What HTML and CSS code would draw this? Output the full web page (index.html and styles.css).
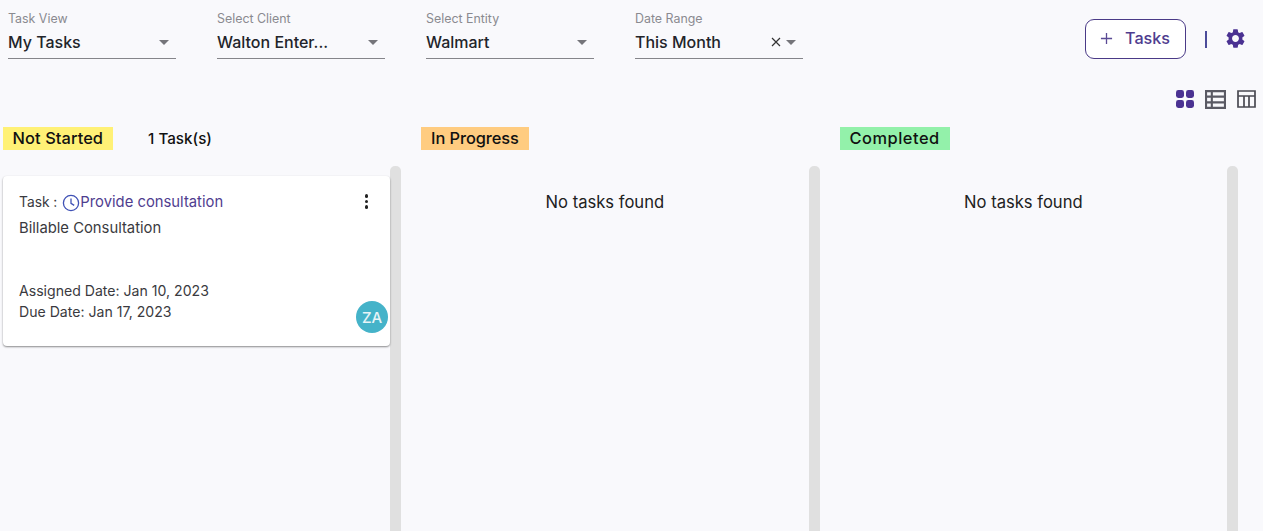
FILE: index.html
```html
<!DOCTYPE html>
<html lang="en">
<head>
    <meta charset="UTF-8">
    <meta name="viewport" content="width=device-width, initial-scale=1.0">
    <title>Tasks</title>
    <link rel="stylesheet" href="styles.css">
</head>
<body>
    <div class="topbar">
        <div class="filters">
            <div class="field">
                <label>Task View</label>
                <div class="select"><span class="value">My Tasks</span><span class="caret"></span></div>
            </div>
            <div class="field">
                <label>Select Client</label>
                <div class="select"><span class="value">Walton Enter...</span><span class="caret"></span></div>
            </div>
            <div class="field">
                <label>Select Entity</label>
                <div class="select"><span class="value">Walmart</span><span class="caret"></span></div>
            </div>
            <div class="field">
                <label>Date Range</label>
                <div class="select">
                    <span class="value">This Month</span>
                    <svg class="clear" viewBox="0 0 10 10"><path d="M1 1l8 8M9 1l-8 8"/></svg>
                    <span class="caret caret-date"></span>
                </div>
            </div>
        </div>
        <div class="actions">
            <button class="add-btn"><svg viewBox="0 0 14 14"><path d="M7 1v12M1 7h12"/></svg>Tasks</button>
            <span class="divider"></span>
            <svg class="gear" viewBox="0 0 24 24"><path d="M19.14 12.94c.04-.3.06-.61.06-.94 0-.32-.02-.64-.07-.94l2.03-1.58a.49.49 0 0 0 .12-.61l-1.92-3.32a.49.49 0 0 0-.59-.22l-2.39.96c-.5-.38-1.03-.7-1.62-.94l-.36-2.54a.48.48 0 0 0-.48-.41h-3.84c-.24 0-.43.17-.47.41l-.36 2.54c-.59.24-1.13.57-1.62.94l-2.39-.96a.48.48 0 0 0-.59.22L2.74 8.87c-.12.21-.08.47.12.61l2.03 1.58c-.05.3-.09.63-.09.94s.02.64.07.94l-2.03 1.58a.49.49 0 0 0-.12.61l1.92 3.32c.12.22.37.29.59.22l2.39-.96c.5.38 1.03.7 1.62.94l.36 2.54c.05.24.24.41.48.41h3.84c.24 0 .44-.17.47-.41l.36-2.54c.59-.24 1.13-.56 1.62-.94l2.39.96c.22.08.47 0 .59-.22l1.92-3.32a.46.46 0 0 0-.12-.61l-2.01-1.58zM12 15.6c-1.98 0-3.6-1.62-3.6-3.6s1.62-3.6 3.6-3.6 3.6 1.62 3.6 3.6-1.62 3.6-3.6 3.6z"/></svg>
        </div>
    </div>

    <div class="view-icons">
        <svg class="view-grid" viewBox="0 0 18 18">
            <rect x="0" y="0" width="8" height="8" rx="2.4"/>
            <rect x="10" y="0" width="8" height="8" rx="2.4"/>
            <rect x="0" y="10" width="8" height="8" rx="2.4"/>
            <rect x="10" y="10" width="8" height="8" rx="2.4"/>
        </svg>
        <svg class="view-list" viewBox="0 0 20 18">
            <path d="M1 1h18v16H1zM1 6.3h18M1 11.7h18M6.5 1v16"/>
        </svg>
        <svg class="view-table" viewBox="0 0 19 18">
            <path d="M1 1h17v16H1zM1 6h17M7 6v11M12 6v11"/>
        </svg>
    </div>

    <div class="board">
        <section class="column">
            <div class="column-head">
                <span class="status status-new">Not Started</span>
                <span class="count">1 Task(s)</span>
            </div>
            <div class="column-body">
                <div class="column-list">
                    <article class="card">
                        <div class="card-title">
                            <span>Task :</span>
                            <svg class="clock" viewBox="0 0 18 18"><circle cx="9" cy="9" r="7.6"/><path d="M9 4.5V9.4l3.2 2"/></svg>
                            <a class="task-link">Provide consultation</a>
                            <span class="kebab"><i></i><i></i><i></i></span>
                        </div>
                        <p class="card-sub">Billable Consultation</p>
                        <p class="card-date first">Assigned Date: Jan 10, 2023</p>
                        <p class="card-date">Due Date: Jan 17, 2023</p>
                        <span class="avatar">ZA</span>
                    </article>
                </div>
                <div class="track"></div>
            </div>
        </section>
        <section class="column">
            <div class="column-head">
                <span class="status status-progress">In Progress</span>
            </div>
            <div class="column-body">
                <div class="column-list"><p class="empty">No tasks found</p></div>
                <div class="track"></div>
            </div>
        </section>
        <section class="column">
            <div class="column-head">
                <span class="status status-done">Completed</span>
            </div>
            <div class="column-body">
                <div class="column-list"><p class="empty">No tasks found</p></div>
                <div class="track"></div>
            </div>
        </section>
    </div>
</body>
</html>
```

FILE: styles.css
```css
* {
  margin: 0;
  padding: 0;
  box-sizing: border-box;
}
html, body {
  height: 531px;
  overflow: hidden;
}
body {
  background: #f9f9fc;
  font-family: "Inter", "Open Sans", sans-serif;
  color: #1f1f24;
  display: flex;
  flex-direction: column;
}

/* top filters */
.topbar {
  display: flex;
  justify-content: space-between;
  padding: 11px 16px 0 8px;
  height: 86px;
}
.filters {
  display: flex;
  gap: 41.5px;
}
.field {
  width: 167.5px;
}
.field label {
  display: block;
  padding-top: 1px;
  font-size: 12.4px;
  line-height: 14px;
  color: #8a8a90;
}
.select {
  display: flex;
  align-items: center;
  height: 33px;
  padding-right: 7px;
  border-bottom: 1px solid #85858a;
}
.select .value {
  flex: 1;
  font-size: 16px;
  font-weight: 500;
  color: #22242a;
}
.caret {
  width: 0;
  height: 0;
  border-left: 5px solid transparent;
  border-right: 5px solid transparent;
  border-top: 5px solid #75757a;
}
.caret-date {
  margin-left: 5px;
}
.clear {
  width: 10px;
  height: 10px;
  fill: none;
  stroke: #333;
  stroke-width: 1.2;
}

.actions {
  display: flex;
  align-items: center;
  height: 40px;
  margin-top: 8px;
}
.add-btn {
  display: flex;
  align-items: center;
  gap: 12px;
  width: 101px;
  height: 40px;
  padding: 0 0 2px 14px;
  background: #fff;
  border: 1px solid #4a3a87;
  border-radius: 9px;
  font-family: inherit;
  font-size: 16.2px;
  font-weight: 500;
  color: #4f3d8f;
}
.add-btn svg {
  width: 13px;
  height: 13px;
  fill: none;
  stroke: #5a4a95;
  stroke-width: 1.4;
}
.divider {
  width: 2px;
  height: 17px;
  margin: 0 19px;
  background: #4c4c9a;
}
.gear {
  width: 23px;
  height: 23px;
  margin: 0 0 2px -2px;
  fill: #4b3292;
}

/* view switch */
.view-icons {
  display: flex;
  justify-content: flex-end;
  align-items: center;
  gap: 11px;
  height: 26px;
  padding-right: 7px;
}
.view-grid {
  width: 18px;
  height: 18px;
  fill: #4b3292;
}
.view-list {
  width: 21px;
  height: 19px;
  fill: none;
  stroke: #5a5a64;
  stroke-width: 2;
}
.view-table {
  width: 19px;
  height: 18px;
  fill: none;
  stroke: #4a4a52;
  stroke-width: 1.7;
}

/* board */
.board {
  flex: 1;
  min-height: 0;
  display: grid;
  grid-template-columns: repeat(3, 398.5px);
  column-gap: 20px;
  padding: 15px 0 0 2.6px;
}
.column {
  display: flex;
  flex-direction: column;
  min-height: 0;
}
.column-head {
  display: flex;
  align-items: center;
  height: 23px;
  margin-bottom: 16px;
}
.status {
  height: 23px;
  line-height: 23px;
  padding: 0 10px;
  font-size: 16.4px;
  font-weight: 500;
  color: #111;
}
.status-new {
  background: #fff176;
  letter-spacing: 0.08px;
}
.status-progress {
  background: #ffcc80;
  letter-spacing: -0.08px;
}
.status-done {
  background: #93f1aa;
  letter-spacing: 0.5px;
}
.count {
  margin-left: 35px;
  font-size: 15.2px;
  font-weight: 500;
  color: #111;
}
.column-body {
  flex: 1;
  display: flex;
  min-height: 0;
}
.column-list {
  flex: 1;
  padding-top: 10px;
}
.track {
  width: 11px;
  background: #e0e0e0;
  border-radius: 5px 5px 0 0;
}

/* card */
.card {
  position: relative;
  height: 170px;
  padding: 16px 16px 16px 16.4px;
  background: #fff;
  border-radius: 4px;
  box-shadow: 0 1px 2px rgba(0, 0, 0, 0.45);
  font-size: 13.8px;
  color: #3a3a40;
}
.card-title {
  display: flex;
  align-items: center;
  height: 20px;
}
.clock {
  width: 18px;
  height: 18px;
  margin: 1px 0 0 5px;
  fill: none;
  stroke: #3f51b5;
  stroke-width: 1.3;
}
.task-link {
  font-size: 14.8px;
  color: #4f3d8f;
}
.kebab {
  position: absolute;
  top: 18px;
  right: 22px;
  display: flex;
  flex-direction: column;
  gap: 2px;
}
.kebab i {
  width: 3.5px;
  height: 3.5px;
  border-radius: 50%;
  background: #222;
}
.card-sub {
  margin-top: 6px;
  line-height: 20px;
  font-size: 14.8px;
}
.card-date {
  line-height: 21px;
  font-size: 14.1px;
}
.card-date.first {
  margin-top: 42px;
}
.avatar {
  position: absolute;
  right: 2px;
  bottom: 13px;
  width: 32px;
  height: 32px;
  border-radius: 50%;
  background: #45b3c9;
  color: #e8f4f7;
  font-size: 15px;
  font-weight: 500;
  display: flex;
  align-items: center;
  justify-content: center;
}
.empty {
  padding: 16px 20px 0 0;
  text-align: center;
  font-size: 16.6px;
  color: #222;
}
```
